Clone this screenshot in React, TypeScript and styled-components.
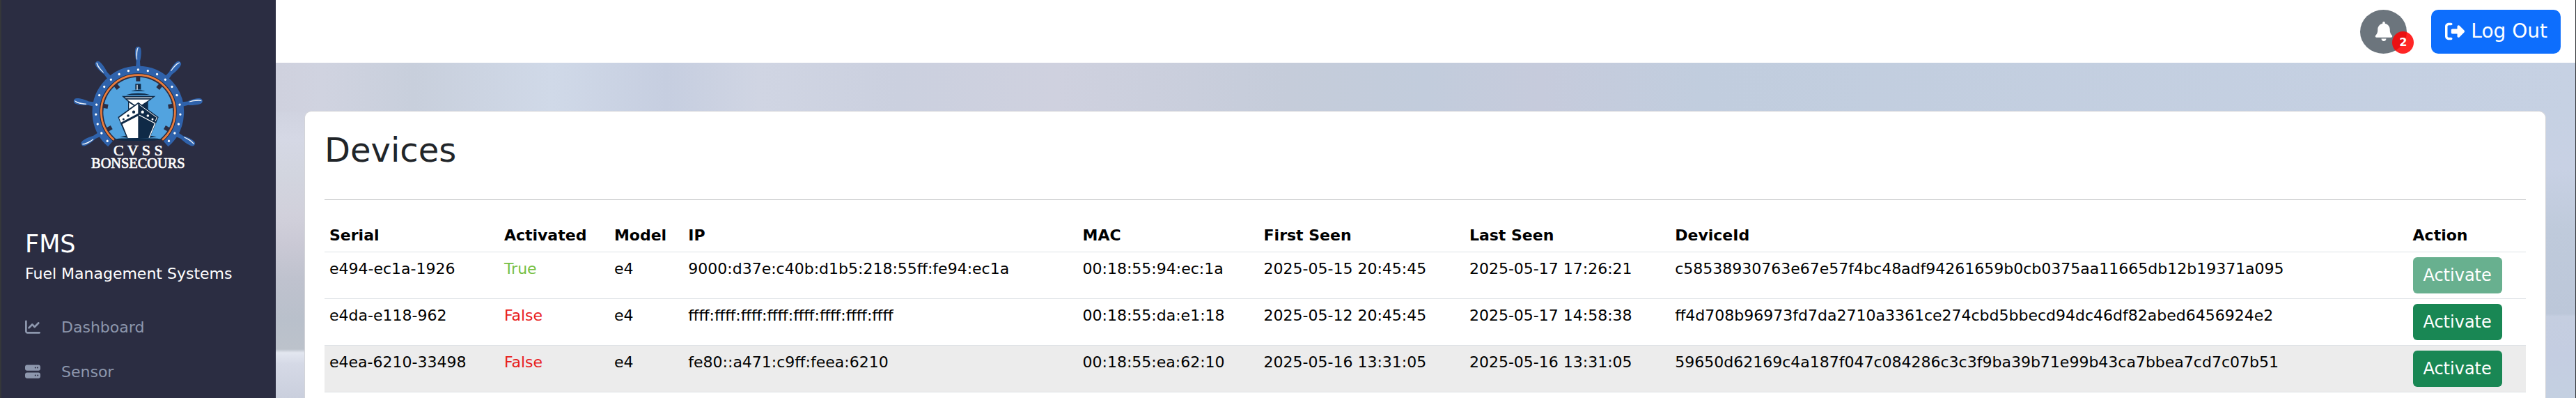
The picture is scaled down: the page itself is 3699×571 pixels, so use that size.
import React from 'react';
import styled, { createGlobalStyle } from 'styled-components';
import { FaBell, FaChartLine, FaRightFromBracket, FaServer } from 'react-icons/fa6';

const Global = createGlobalStyle`
  *, *::before, *::after { box-sizing: border-box; }
  html, body, #root { height: 100%; }
  body {
    margin: 0;
    overflow: hidden;
    font-family: "DejaVu Sans", Verdana, sans-serif;
    font-size: 22px;
    line-height: 33px;
    color: #212529;
  }
`;

const Page = styled.div`
  display: flex;
  height: 100%;
  border-left: 2px solid #35373a;
  border-right: 1px solid #35373a;
`;

const Sidebar = styled.aside`
  flex: 0 0 394px;
  background: #2b2d42;
  color: #fff;
`;

const Brand = styled.div`
  display: flex;
  justify-content: center;
  padding: 60px 0 0;
`;

const LogoSvg = styled.svg`
  display: block;
  width: 220px;
  height: 190px;
`;

const SystemInfo = styled.div`
  padding: 79px 34px 0;
`;

const SystemName = styled.h1`
  margin: 0 0 5px;
  font-size: 35px;
  line-height: 42px;
  font-weight: 400;
`;

const SystemTitle = styled.p`
  margin: 0;
`;

const Nav = styled.nav`
  display: flex;
  flex-direction: column;
  padding-top: 28px;
`;

const NavLink = styled.a`
  display: flex;
  align-items: center;
  gap: 30px;
  height: 64px;
  padding: 0 34px;
  color: #8d97ad;
  text-decoration: none;
  svg { width: 22px; height: 22px; }
`;

/* Hazy sky: side strips run down beside the card, the wide gradient shows above it. */
const Main = styled.main`
  flex: 1;
  min-width: 0;
  display: flex;
  flex-direction: column;
  background:
    linear-gradient(180deg, #d0d3e0 0, #d5d8e5 40px, #d2d5df 90px, #d1d0db 150px, #cac9d5 190px, #bfc2ce 240px, #b9c0cb 300px, #bcc2cb 341px, #e3e7f0 346px, #d5d9e6 362px, #cacfdd 412px) 0 160px / 50px 100% no-repeat,
    linear-gradient(180deg, #c6d1e3 0, #c8d1e4 80px, #bfcadb 170px, #bcc7d9 290px, #c5cee0 294px, #c4cde1 350px, #c4d0e1 412px) 100% 160px / 50px 100% no-repeat,
    linear-gradient(90deg, #cfd1de 0%, #d0d3e0 2%, #c8cfdc 6%, #d0d9e8 12%, #c6cee0 17%, #d0d5e3 21%, #cbd0df 27%, #cfd1df 34%, #c5ccda 44%, #c2ccdc 50%, #c6cbdc 55%, #c1cdde 62%, #c6d1e3 100%);
`;

const TopBar = styled.header`
  display: flex;
  flex: none;
  justify-content: flex-end;
  align-items: center;
  gap: 35px;
  height: 90px;
  padding: 0 21px;
  background: #fff;
`;

const BellButton = styled.button`
  position: relative;
  display: flex;
  align-items: center;
  justify-content: center;
  width: 67px;
  height: 63px;
  padding: 0;
  border: 0;
  border-radius: 50%;
  background: #6c757d;
  color: #fff;
  svg { width: 28px; height: 28px; }
`;

const Badge = styled.span`
  position: absolute;
  right: -10px;
  bottom: 0;
  width: 31px;
  height: 32px;
  border-radius: 50%;
  background: rgba(255, 0, 0, 0.85);
  font: bold 16px/32px "DejaVu Sans", Verdana, sans-serif;
  text-align: center;
`;

const LogOutButton = styled.button`
  display: flex;
  align-items: center;
  gap: 9px;
  height: 63px;
  padding: 0 19px 0 20px;
  border: 0;
  border-radius: 10px;
  background: #0d6efd;
  color: #fff;
  font: 400 28px/42px "DejaVu Sans", Verdana, sans-serif;
  svg { width: 28px; height: 28px; }
`;

const Card = styled.section`
  flex: 1;
  margin: 69px 42px 0 41px;
  padding: 28px 28px 0;
  border: 1px solid #d3d4d8;
  border-bottom: 0;
  border-radius: 10px 10px 0 0;
  background: #fff;
`;

const Title = styled.h2`
  margin: 0;
  font-size: 48px;
  line-height: 54px;
  font-weight: 400;
`;

const Divider = styled.hr`
  height: 1px;
  margin: 44px 0 27px;
  border: 0;
  background: #c7c8ca;
`;

const DeviceTable = styled.table`
  width: 100%;
  border-collapse: collapse;
  color: #000;
`;

const HeadCell = styled.th`
  padding: 7px;
  border-bottom: 1px solid #dee2e6;
  text-align: left;
  font-weight: 700;
`;

const Row = styled.tr<{ $active?: boolean }>`
  background: ${(p) => (p.$active ? '#ececec' : 'transparent')};
`;

const Cell = styled.td<{ $color?: string }>`
  padding: 7px;
  border-bottom: 1px solid #dee2e6;
  vertical-align: top;
  white-space: nowrap;
  color: ${(p) => p.$color ?? 'inherit'};
`;

const ActivateButton = styled.button`
  display: block;
  width: 128px;
  height: 52px;
  padding: 0;
  border: 0;
  border-radius: 6px;
  background: #198754;
  color: #fff;
  font: 400 24px/36px "DejaVu Sans", Verdana, sans-serif;
  &:disabled { opacity: 0.65; }
`;

const handleAngles = [-120, -80, -40, 0, 40, 80, 120];
const rivets = Array.from({ length: 21 }, (_, i) => ((i - 10) * 40) / 3);

const arc = (r: number, deg: number) => {
  const a = (deg * Math.PI) / 180;
  const x = r * Math.sin(a);
  const y = -r * Math.cos(a);
  return `M${-x} ${y}A${r} ${r} 0 1 1 ${x} ${y}`;
};

function Logo() {
  return (
    <LogoSvg viewBox="0 0 660 570" role="img" aria-label="CVSS Bonsecours">
      <g transform="translate(328 302)">
        {handleAngles.map((a) => (
          <g key={a} transform={`rotate(${a})`}>
            <path
              d="M-10-190L-8-218C-13-235-15-262-11-274C-8-284 8-284 11-274C15-262 13-235 8-218L10-190Z"
              fill="#2f62ab"
            />
            <path d="M0-277C-8-270-9-245-5-226C-6-245-5-265 0-277Z" fill="#fff" stroke="#fff" strokeWidth="2" />
          </g>
        ))}
        <path d={arc(182, 139)} fill="none" stroke="#2f62ab" strokeWidth="31" />
        {rivets.map((a) => (
          <circle key={a} cy="-182" r="5" fill="#fff" transform={`rotate(${a})`} />
        ))}
        <path d={arc(159, 139)} fill="none" stroke="#f5823c" strokeWidth="8" />
        <path d={arc(158, 139)} fill="none" stroke="#a85a3c" strokeWidth="1" />
        <path d="M-93 118A150 150 0 1 1 93 118Z" fill="#52a3df" />
        {handleAngles.map((a) => (
          <rect key={a} x="-9" y="-153" width="18" height="21" fill="#2b2d42" transform={`rotate(${a})`} />
        ))}
      </g>
      <g fill="#0f2a47">
        <path d="M316 181H340V206L358 212H298L316 206Z" />
        <path d="M276 229C305 219 352 219 380 229Z" />
        <path d="M258 233H403L371 258V290H285V258Z" />
        <path d="M250 409L276 404L284 413ZM408 409L382 404L374 413Z" />
        <ellipse cx="328" cy="420" rx="100" ry="6" />
      </g>
      <path d="M306 208Q328 202 350 208" stroke="#52a3df" strokeWidth="2" fill="none" />
      <path d="M322 185H326V206H322Z" fill="#fff" />
      <path d="M270 239H390L386 243H275ZM280 248H378L342 272L329 262L314 272ZM289 262L309 275L289 288Z" fill="#fff" />
      <path d="M329 260L416 324L404 353L378 415H280L253 353L241 324Z" fill="#0f2a47" />
      <path d="M328 267V308L254 347L246 327Z" fill="#fff" />
      <path d="M328 319V414H284L260 354Z" fill="#fff" />
      <path d="M332 315L401 351L375 413" fill="none" stroke="#fff" strokeWidth="4" />
      <path d="M334 271L409 326L402 342" fill="none" stroke="#fff" strokeWidth="3" />
      <g fill="#0f2a47">
        <circle cx="309" cy="302" r="6.5" />
        <circle cx="285" cy="318" r="5.5" />
        <circle cx="265" cy="333" r="4.5" />
      </g>
      <g fill="#fff">
        <circle cx="347" cy="302" r="6.5" />
        <circle cx="370" cy="318" r="5.5" />
        <circle cx="390" cy="333" r="4.5" />
      </g>
      <g fill="#fff" stroke="#fff" strokeWidth="2" fontFamily='"Liberation Serif", serif' textAnchor="middle">
        <text x="328" y="488" fontSize="66">C V S S</text>
        <text x="328" y="543" fontSize="61">BONSECOURS</text>
      </g>
    </LogoSvg>
  );
}

const columns = ['Serial', 'Activated', 'Model', 'IP', 'MAC', 'First Seen', 'Last Seen', 'DeviceId', 'Action'];

const devices = [
  {
    serial: 'e494-ec1a-1926', activated: true, model: 'e4',
    ip: '9000:d37e:c40b:d1b5:218:55ff:fe94:ec1a', mac: '00:18:55:94:ec:1a',
    first: '2025-05-15 20:45:45', last: '2025-05-17 17:26:21',
    id: 'c58538930763e67e57f4bc48adf94261659b0cb0375aa11665db12b19371a095',
  },
  {
    serial: 'e4da-e118-962', activated: false, model: 'e4',
    ip: 'ffff:ffff:ffff:ffff:ffff:ffff:ffff:ffff', mac: '00:18:55:da:e1:18',
    first: '2025-05-12 20:45:45', last: '2025-05-17 14:58:38',
    id: 'ff4d708b96973fd7da2710a3361ce274cbd5bbecd94dc46df82abed6456924e2',
  },
  {
    serial: 'e4ea-6210-33498', activated: false, model: 'e4', active: true,
    ip: 'fe80::a471:c9ff:feea:6210', mac: '00:18:55:ea:62:10',
    first: '2025-05-16 13:31:05', last: '2025-05-16 13:31:05',
    id: '59650d62169c4a187f047c084286c3c3f9ba39b71e99b43ca7bbea7cd7c07b51',
  },
];

export default function App() {
  return (
    <>
      <Global />
      <Page>
        <Sidebar>
          <Brand><Logo /></Brand>
          <SystemInfo>
            <SystemName>FMS</SystemName>
            <SystemTitle>Fuel Management Systems</SystemTitle>
          </SystemInfo>
          <Nav>
            <NavLink href="#dashboard"><FaChartLine />Dashboard</NavLink>
            <NavLink href="#sensor"><FaServer />Sensor</NavLink>
          </Nav>
        </Sidebar>
        <Main>
          <TopBar>
            <BellButton aria-label="Notifications"><FaBell /><Badge>2</Badge></BellButton>
            <LogOutButton><FaRightFromBracket />Log Out</LogOutButton>
          </TopBar>
          <Card>
            <Title>Devices</Title>
            <Divider />
            <DeviceTable>
              <thead>
                <tr>{columns.map((c) => <HeadCell key={c} scope="col">{c}</HeadCell>)}</tr>
              </thead>
              <tbody>
                {devices.map((d) => (
                  <Row key={d.serial} $active={d.active}>
                    <Cell>{d.serial}</Cell>
                    <Cell $color={d.activated ? '#77c043' : '#e8201c'}>{d.activated ? 'True' : 'False'}</Cell>
                    <Cell>{d.model}</Cell>
                    <Cell>{d.ip}</Cell>
                    <Cell>{d.mac}</Cell>
                    <Cell>{d.first}</Cell>
                    <Cell>{d.last}</Cell>
                    <Cell>{d.id}</Cell>
                    <Cell><ActivateButton disabled={d.activated}>Activate</ActivateButton></Cell>
                  </Row>
                ))}
              </tbody>
            </DeviceTable>
          </Card>
        </Main>
      </Page>
    </>
  );
}
